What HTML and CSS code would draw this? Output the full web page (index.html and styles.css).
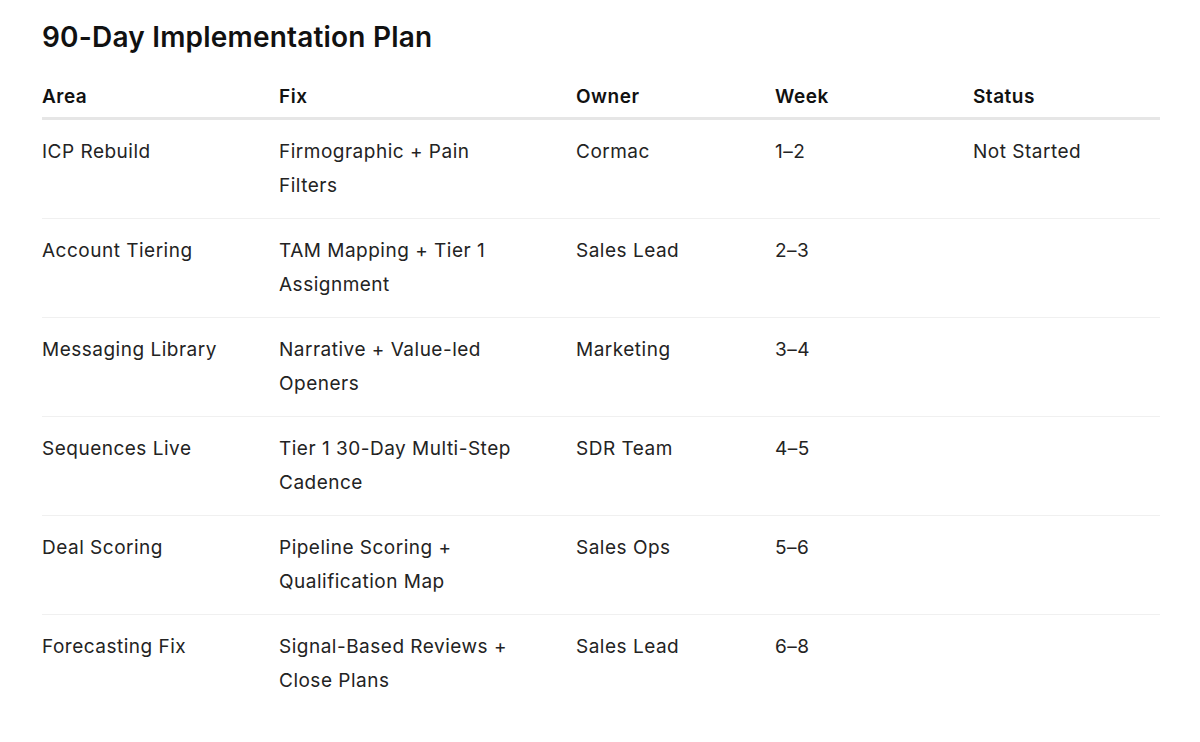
FILE: index.html
```html
<!DOCTYPE html>
<html>
<head>
<meta charset="utf-8">
<link rel="stylesheet" href="styles.css">
</head>
<body>
<main class="page">
  <h2 class="title">90-Day Implementation Plan</h2>
  <table class="plan">
    <colgroup>
      <col class="c-area"><col class="c-fix"><col class="c-owner"><col class="c-week"><col class="c-status">
    </colgroup>
    <thead>
      <tr><th>Area</th><th>Fix</th><th>Owner</th><th>Week</th><th>Status</th></tr>
    </thead>
    <tbody>
      <tr><td>ICP Rebuild</td><td><span class="wrap">Firmographic + Pain Filters</span></td><td>Cormac</td><td>1–2</td><td>Not Started</td></tr>
      <tr><td>Account Tiering</td><td><span class="wrap">TAM Mapping + Tier 1 Assignment</span></td><td>Sales Lead</td><td>2–3</td><td></td></tr>
      <tr><td>Messaging Library</td><td><span class="wrap">Narrative + Value-led Openers</span></td><td>Marketing</td><td>3–4</td><td></td></tr>
      <tr><td>Sequences Live</td><td><span class="wrap">Tier 1 30-Day Multi-Step Cadence</span></td><td>SDR Team</td><td>4–5</td><td></td></tr>
      <tr><td>Deal Scoring</td><td><span class="wrap">Pipeline Scoring + Qualification Map</span></td><td>Sales Ops</td><td>5–6</td><td></td></tr>
      <tr><td>Forecasting Fix</td><td><span class="wrap">Signal-Based Reviews + Close Plans</span></td><td>Sales Lead</td><td>6–8</td><td></td></tr>
    </tbody>
  </table>
</main>
</body>
</html>
```
FILE: styles.css
```css
html, body {
  margin: 0;
  padding: 0;
  background: #ffffff;
}
body {
  font-family: Inter, "Noto Sans", "Liberation Sans", sans-serif;
  color: #232323;
}
.page {
  padding: 18px 40px 0 42px;
}
.title {
  margin: 0 0 24px 0;
  font-size: 28px;
  line-height: 38px;
  font-weight: 600;
  color: #111;
  letter-spacing: 0.2px;
}
.plan {
  width: 1118px;
  border-collapse: collapse;
  table-layout: fixed;
  font-size: 19px;
  letter-spacing: 0.5px;
}
.c-area { width: 237px; }
.c-fix { width: 297px; }
.c-owner { width: 199px; }
.c-week { width: 198px; }
.c-status { width: 187px; }
.plan th {
  text-align: left;
  font-weight: 600;
  color: #111;
  padding: 0 0 3px 0;
  line-height: 34px;
  border-bottom: 3px solid #e6e6e6;
}
.plan td {
  vertical-align: top;
  padding: 15px 0 15px 0;
  line-height: 34px;
  border-bottom: 1px solid #f0f0f0;
}
.plan tbody tr:last-child td {
  border-bottom: none;
}
.wrap {
  display: block;
  max-width: 244px;
}
```
